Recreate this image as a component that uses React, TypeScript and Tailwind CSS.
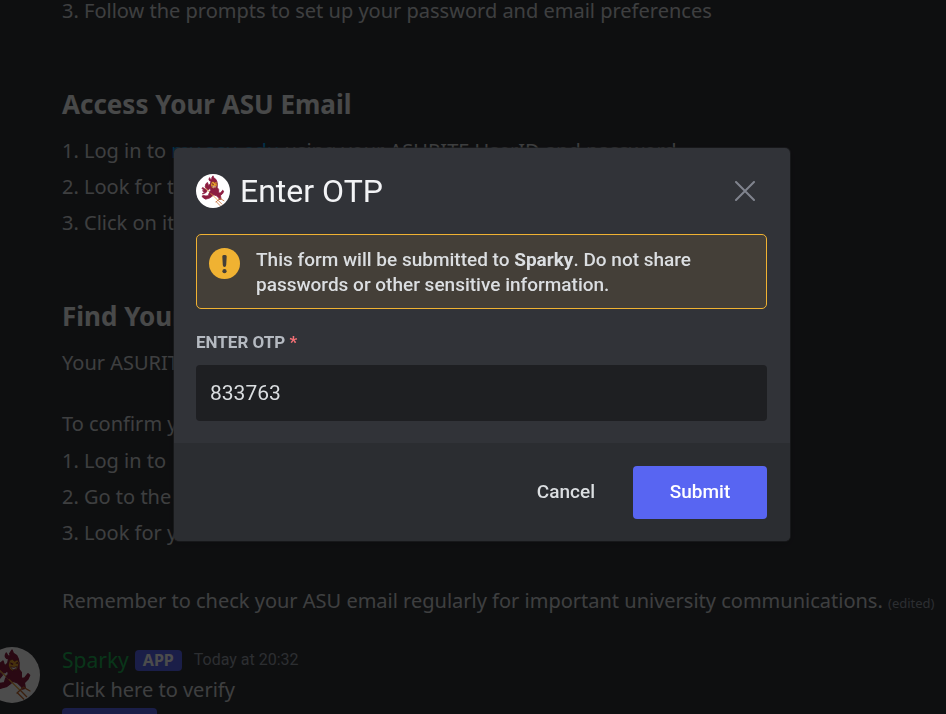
import React, { useState } from "react";

function SparkyLogo({ className }: { className: string }) {
  return (
    <svg viewBox="0 0 168 168" className={className} aria-hidden="true">
      <circle cx="84" cy="84" r="84" fill="#ffffff" />
      <g fill="#8c1d40" stroke="#8c1d40" strokeLinejoin="round" strokeWidth="4">
        <path d="M67 18C60 28 66 36 74 35L71 49L62 57L57 42L49 48L45 64L54 78L64 77L71 69L73 83L65 94L61 107L48 109L36 116L48 124L67 119L78 111L88 103L101 108L113 119L115 126L124 124L121 107L132 96L137 85L132 80L122 93L112 94L112 76L105 67L105 48L103 36L98 26L88 19L84 9L77 20L80 27L72 27Z" />
        <path d="M49 78L34 67L29 70L40 82L32 83L42 90L31 98L47 94L55 84Z" />
        <path d="M52 111L36 105L29 111L40 120L50 123Z" />
      </g>
      <path
        d="M77 40L85 37L92 43L100 38L105 46L103 59L98 69L87 73L77 66L73 54Z"
        fill="#e9a32c"
        stroke="#6b1732"
        strokeWidth="2"
      />
      <path d="M79 46L88 50L87 54L80 52ZM94 49L102 44L101 51Z" fill="#6b1732" />
      <path d="M80 59Q91 64 100 58Q98 68 88 68Q82 66 80 59Z" fill="#ffffff" stroke="#6b1732" strokeWidth="2" />
      <path d="M86 69L91 79L97 67Z" fill="#8c1d40" />
      <g fill="none" stroke="#c4682f" strokeLinecap="round" strokeWidth="4">
        <path d="M48 71L108 130" stroke="#e8a33d" />
        <path d="M99 138L119 120M100 137L119 156M109 130L128 149M119 121L138 132" />
      </g>
      <path d="M69 82L80 88L75 98L65 90Z" fill="#8c1d40" />
    </svg>
  );
}

function Chat() {
  return (
    <main className="-mt-[7px] pl-[62px] font-['Noto_Sans',sans-serif] text-[20px] leading-[30px] text-[#cfd2d5]">
      <ol className="leading-9">
        <li>3. Follow the prompts to set up your password and email preferences</li>
      </ol>
      <h2 className="mt-[59px] text-[26px] font-bold leading-8 text-[#f2f3f5]">Access Your ASU Email</h2>
      <ol className="mt-[13px] leading-9">
        <li>
          1. Log in to <a href="#my-asu" className="text-[#00a8fc]">my.asu.edu</a> using your ASURITE UserID and password
        </li>
        <li>2. Look for the email icon</li>
        <li>3. Click on it</li>
      </ol>
      <h2 className="mt-[59px] text-[26px] font-bold leading-8 text-[#f2f3f5]">Find Your</h2>
      <p className="mt-4">Your ASURITE</p>
      <p className="mt-[31px]">To confirm your</p>
      <ol className="mt-1 leading-9">
        <li>1. Log in to</li>
        <li>2. Go to the</li>
        <li>3. Look for your</li>
      </ol>
      <p className="mt-[35px] whitespace-nowrap">
        Remember to check your ASU email regularly for important university communications.{" "}
        <span className="text-[13px] text-[#949ba4]">(edited)</span>
      </p>
      <article className="-ml-[78px] mt-[27px] flex items-start gap-[22px]">
        <SparkyLogo className="mt-0.5 size-14 shrink-0" />
        <div className="min-w-0 flex-1">
          <header className="flex items-center">
            <span className="text-[21px] text-[#1fb155]">Sparky</span>
            <span className="ml-1.5 rounded bg-[#5865f2] px-2 text-[16px] font-bold leading-[21px] text-white">
              APP
            </span>
            <time className="ml-3 font-['Roboto',sans-serif] text-[16px] text-[#949ba4]">Today at 20:32</time>
          </header>
          <p>Click here to verify</p>
          <button className="mt-[3px] h-11 w-[95px] rounded bg-[#5865f2] text-[18px] font-medium text-white">
            Verify
          </button>
        </div>
      </article>
    </main>
  );
}

function OtpDialog() {
  const [otp, setOtp] = useState("833763");
  return (
    <div className="fixed inset-0 flex items-center justify-center bg-black/70 pb-[25px] pl-[18px]">
      <form
        role="dialog"
        aria-labelledby="otp-title"
        onSubmit={(e) => e.preventDefault()}
        className="w-full max-w-[616px] overflow-hidden rounded-[5px] bg-[#313338] shadow-[0_0_0_1px_rgba(30,31,34,0.6),0_2px_10px_rgba(0,0,0,0.2)]"
      >
        <div className="pb-[22px] pl-[22px] pr-[23px] pt-[26px]">
          <header className="flex h-[34px] items-center">
            <SparkyLogo className="size-[34px]" />
            <h1 id="otp-title" className="ml-2.5 flex-1 text-[32px] leading-[34px] text-[#f2f3f5]">
              Enter OTP
            </h1>
            <button type="button" aria-label="Close" className="mr-3 text-[#80848e]">
              <svg viewBox="0 0 20 20" className="size-5" fill="none" stroke="currentColor" strokeWidth="2" strokeLinecap="round">
                <path d="M1 1L19 19M19 1L1 19" />
              </svg>
            </button>
          </header>
          <div className="mt-[26px] flex items-start gap-4 rounded-[5px] border border-[#f0b232] bg-[#443f38] px-3 pb-[11px] pt-3 text-[#dbdee1]">
            <svg viewBox="0 0 31 31" className="mt-px size-[31px] shrink-0" aria-hidden="true">
              <circle cx="15.5" cy="15.5" r="15.5" fill="#f0b232" />
              <path d="M13.3 8.5Q13.2 7 14.7 7H16.3Q17.8 7 17.7 8.5L17.2 17Q17 19 15.5 19Q14 19 13.8 17Z" fill="#443f38" />
              <circle cx="15.5" cy="23.2" r="2.1" fill="#443f38" />
            </svg>
            <p className="text-[19px] font-medium leading-[25px]">
              This form will be submitted to <strong className="font-bold">Sparky</strong>. Do not share passwords or
              other sensitive information.
            </p>
          </div>
          <label htmlFor="otp" className="mt-[22px] block text-[17px] font-bold leading-[22px] text-[#b5bac1]">
            ENTER OTP <span className="text-[#f47076]">*</span>
          </label>
          <input
            id="otp"
            value={otp}
            onChange={(e) => setOtp(e.target.value)}
            className="mt-3 block h-14 w-full rounded bg-[#1e1f22] px-3.5 text-[21px] text-[#dbdee1] outline-none"
          />
        </div>
        <footer className="flex items-center justify-end bg-[#2b2d31] pb-[22px] pr-[23px] pt-[23px]">
          <button type="button" className="mr-[38px] text-[19px] font-medium text-[#dbdee1]">
            Cancel
          </button>
          <button type="submit" className="h-[53px] w-[134px] rounded bg-[#5865f2] text-[19px] font-medium text-white">
            Submit
          </button>
        </footer>
      </form>
    </div>
  );
}

export default function App() {
  return (
    <div className="flow-root h-screen overflow-hidden bg-[#313338] font-['Roboto','Noto_Sans',sans-serif]">
      <Chat />
      <OtpDialog />
    </div>
  );
}
